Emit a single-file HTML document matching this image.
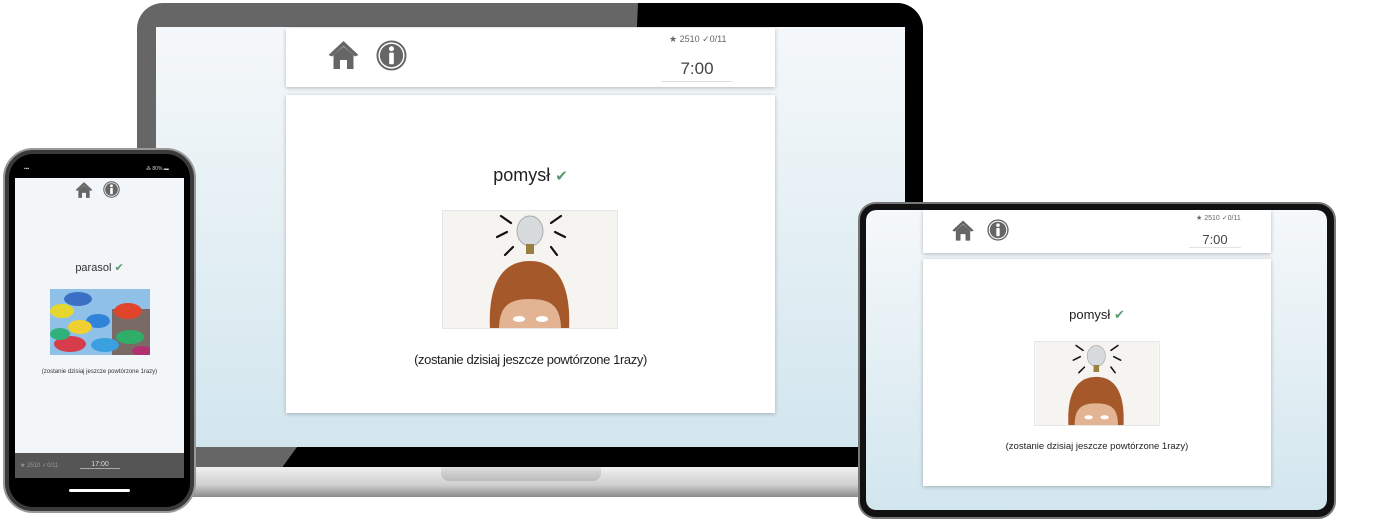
<!DOCTYPE html>
<html><head><meta charset="utf-8"><style>
*{margin:0;padding:0;box-sizing:border-box}
body{width:1400px;height:532px;background:#fff;position:relative;overflow:hidden;font-family:"Liberation Sans",sans-serif}
.a{position:absolute}
.card{position:absolute;background:#fff;box-shadow:0 1px 4px rgba(0,0,0,.25)}
.t{position:absolute;text-align:center;color:#222;white-space:nowrap}
</style></head><body>
<svg width="0" height="0" style="position:absolute">
<defs>
<g id="home"><path d="M16 2 L1 16 L4.5 17.5 L16 7 L27.5 17.5 L31 16 Z" fill="#666"/><path d="M6 16 L16 7.5 L26 16 V30 H19.5 V21 H12.5 V30 H6 Z" fill="#666"/></g>
<g id="info"><circle cx="16" cy="16" r="14.5" fill="none" stroke="#666" stroke-width="2"/><circle cx="16" cy="16" r="12" fill="#666"/><circle cx="16" cy="9" r="2.6" fill="#fff"/><rect x="13.6" y="13" width="4.8" height="12" rx="1" fill="#fff"/></g>
<linearGradient id="bg" x1="0" y1="0" x2="0" y2="1"><stop offset="0" stop-color="#f5f8fa"/><stop offset="1" stop-color="#d2e6ee"/></linearGradient>
<g id="bulb">
<rect x="0" y="0" width="176" height="119" fill="#f6f4f1"/>
<g stroke="#111" stroke-width="2.2" stroke-linecap="round">
<line x1="58" y1="5" x2="68" y2="12"/><line x1="118" y1="5" x2="108" y2="12"/>
<line x1="54" y1="26" x2="64" y2="21"/><line x1="122" y1="26" x2="112" y2="21"/>
<line x1="62" y1="44" x2="70" y2="36"/><line x1="114" y1="44" x2="108" y2="36"/>
</g>
<ellipse cx="87" cy="20" rx="13" ry="15" fill="#d8dbde" stroke="#aaa" stroke-width="1"/>
<rect x="83" y="33" width="8" height="10" fill="#9a8040"/>
<path d="M47 119 C45 80 55 50 87 50 C118 50 128 80 126 119 Z" fill="#a5592a"/>
<path d="M56 119 C56 95 66 88 87 88 C108 88 118 95 118 119 Z" fill="#e2b493"/>
<ellipse cx="76" cy="108" rx="6" ry="3" fill="#fff"/><ellipse cx="99" cy="108" rx="6" ry="3" fill="#fff"/>
</g>
</defs></svg>

<!-- Laptop -->
<div class="a" style="left:137px;top:3px;width:786px;height:466px;border-radius:26px 26px 0 0;background:#666"></div>
<div class="a" style="left:618px;top:3px;width:305px;height:466px;border-radius:0 26px 0 0;background:#000;clip-path:polygon(20px 0,100% 0,100% 100%,0 100%)"></div>
<div class="a" style="left:137px;top:447px;width:786px;height:22px;background:#000"></div>
<div class="a" style="left:137px;top:447px;width:160px;height:22px;background:#666;clip-path:polygon(0 0,100% 0,90% 100%,0 100%)"></div>
<svg class="a" style="left:156px;top:27px" width="749" height="420"><rect width="749" height="420" fill="url(#bg)"/></svg>
<div class="a" style="left:150px;top:467px;width:760px;height:30px;background:linear-gradient(#f0f0f0,#cfcfcf 60%,#8a8a8a);border-radius:0 0 8px 8px"></div>
<div class="a" style="left:441px;top:467px;width:160px;height:14px;background:linear-gradient(#ddd,#bbb);border-radius:0 0 8px 8px"></div>

<div class="card" style="left:286px;top:28px;width:489px;height:59px">
<svg class="a" style="left:41px;top:11px" width="33" height="32" viewBox="0 0 32 32"><use href="#home"/></svg>
<svg class="a" style="left:90px;top:12px" width="31" height="31" viewBox="0 0 32 32"><use href="#info"/></svg>
<div class="t" style="left:383px;top:6px;font-size:9px;color:#666">★ 2510 ✓0/11</div>
<div class="t" style="left:376px;top:31px;width:70px;font-size:17px;color:#444;border-bottom:1px solid #ddd;padding-bottom:2px">7:00</div>
</div>
<div class="card" style="left:286px;top:95px;width:489px;height:318px">
<div class="t" style="left:0;width:489px;top:70px;font-size:18px">pomysł <span style="color:#5a9a70;font-size:15px">✔</span></div>
<svg class="a" style="left:156px;top:115px;border:1px solid #e6e6e6" width="176" height="119"><use href="#bulb"/></svg>
<div class="t" style="left:0;width:489px;top:257px;font-size:13px;letter-spacing:-0.4px">(zostanie dzisiaj jeszcze powtórzone 1razy)</div>
</div>

<!-- Phone -->
<div class="a" style="left:3px;top:148px;width:193px;height:365px;border-radius:30px;background:#3a3a3a;border:2px solid #999"></div>
<div class="a" style="left:9px;top:154px;width:181px;height:353px;border-radius:24px;background:#000"></div>
<div class="a" style="left:15px;top:178px;width:169px;height:275px;background:#f2f6f8"></div>
<div class="t" style="left:24px;top:166px;font-size:5px;color:#ccc">▪▪▪</div>
<div class="t" style="left:146px;top:166px;font-size:5px;color:#ccc">⁂ 80% ▬</div>
<svg class="a" style="left:75px;top:181px" width="18" height="18" viewBox="0 0 32 32"><use href="#home"/></svg>
<svg class="a" style="left:103px;top:181px" width="17" height="17" viewBox="0 0 32 32"><use href="#info"/></svg>
<div class="t" style="left:15px;width:169px;top:261px;font-size:11px;color:#333">parasol <span style="color:#5a9a70">✔</span></div>
<svg class="a" style="left:50px;top:289px" width="100" height="66">
<rect width="100" height="66" fill="#8fc1e8"/>
<rect x="62" y="20" width="38" height="46" fill="#7a6a66"/>
<ellipse cx="28" cy="10" rx="14" ry="7" fill="#3b6fc4"/><ellipse cx="12" cy="22" rx="12" ry="7" fill="#e6d72e"/>
<ellipse cx="78" cy="22" rx="14" ry="8" fill="#e0452b"/><ellipse cx="48" cy="32" rx="12" ry="7" fill="#2f83d8"/>
<ellipse cx="30" cy="38" rx="12" ry="7" fill="#f0d030"/><ellipse cx="80" cy="48" rx="14" ry="7" fill="#2fae6a"/>
<ellipse cx="20" cy="55" rx="16" ry="8" fill="#d63c4a"/><ellipse cx="55" cy="56" rx="14" ry="7" fill="#3aa0e0"/>
<ellipse cx="10" cy="45" rx="10" ry="6" fill="#30b07a"/><ellipse cx="92" cy="62" rx="10" ry="5" fill="#b03070"/>
</svg>
<div class="t" style="left:15px;width:169px;top:369px;font-size:6px;color:#333">(zostanie dzisiaj jeszcze powtórzone 1razy)</div>
<div class="a" style="left:15px;top:453px;width:169px;height:25px;background:#555"></div>
<div class="t" style="left:20px;top:462px;font-size:6px;color:#999">★ 2510 ✓0/11</div>
<div class="t" style="left:80px;top:461px;width:40px;font-size:7px;color:#ddd;border-bottom:1px solid #aaa">17:00</div>
<div class="a" style="left:69px;top:489px;width:61px;height:3px;border-radius:2px;background:#fff"></div>

<!-- Tablet -->
<div class="a" style="left:1316px;top:322px;width:14px;height:72px;border-radius:6px;background:#111"></div>
<div class="a" style="left:858px;top:202px;width:478px;height:317px;border-radius:18px;background:#111;border:2px solid #777"></div>
<svg class="a" style="left:866px;top:210px;border-radius:10px" width="461" height="300"><rect width="461" height="300" rx="10" fill="url(#bg)"/></svg>
<div class="card" style="left:923px;top:210px;width:348px;height:43px">
<svg class="a" style="left:28px;top:9px" width="24" height="23" viewBox="0 0 32 32"><use href="#home"/></svg>
<svg class="a" style="left:64px;top:9px" width="22" height="22" viewBox="0 0 32 32"><use href="#info"/></svg>
<div class="t" style="left:273px;top:4px;font-size:7px;color:#666">★ 2510 ✓0/11</div>
<div class="t" style="left:266px;top:22px;width:52px;font-size:13px;color:#444;border-bottom:1px solid #e3e3e3">7:00</div>
</div>
<div class="card" style="left:923px;top:259px;width:348px;height:227px">
<div class="t" style="left:0;width:348px;top:48px;font-size:13px">pomysł <span style="color:#5a9a70">✔</span></div>
<svg class="a" style="left:111px;top:82px;border:1px solid #e6e6e6" width="126" height="85" viewBox="0 0 176 119"><use href="#bulb"/></svg>
<div class="t" style="left:0;width:348px;top:182px;font-size:9.5px">(zostanie dzisiaj jeszcze powtórzone 1razy)</div>
</div>
</body></html>
